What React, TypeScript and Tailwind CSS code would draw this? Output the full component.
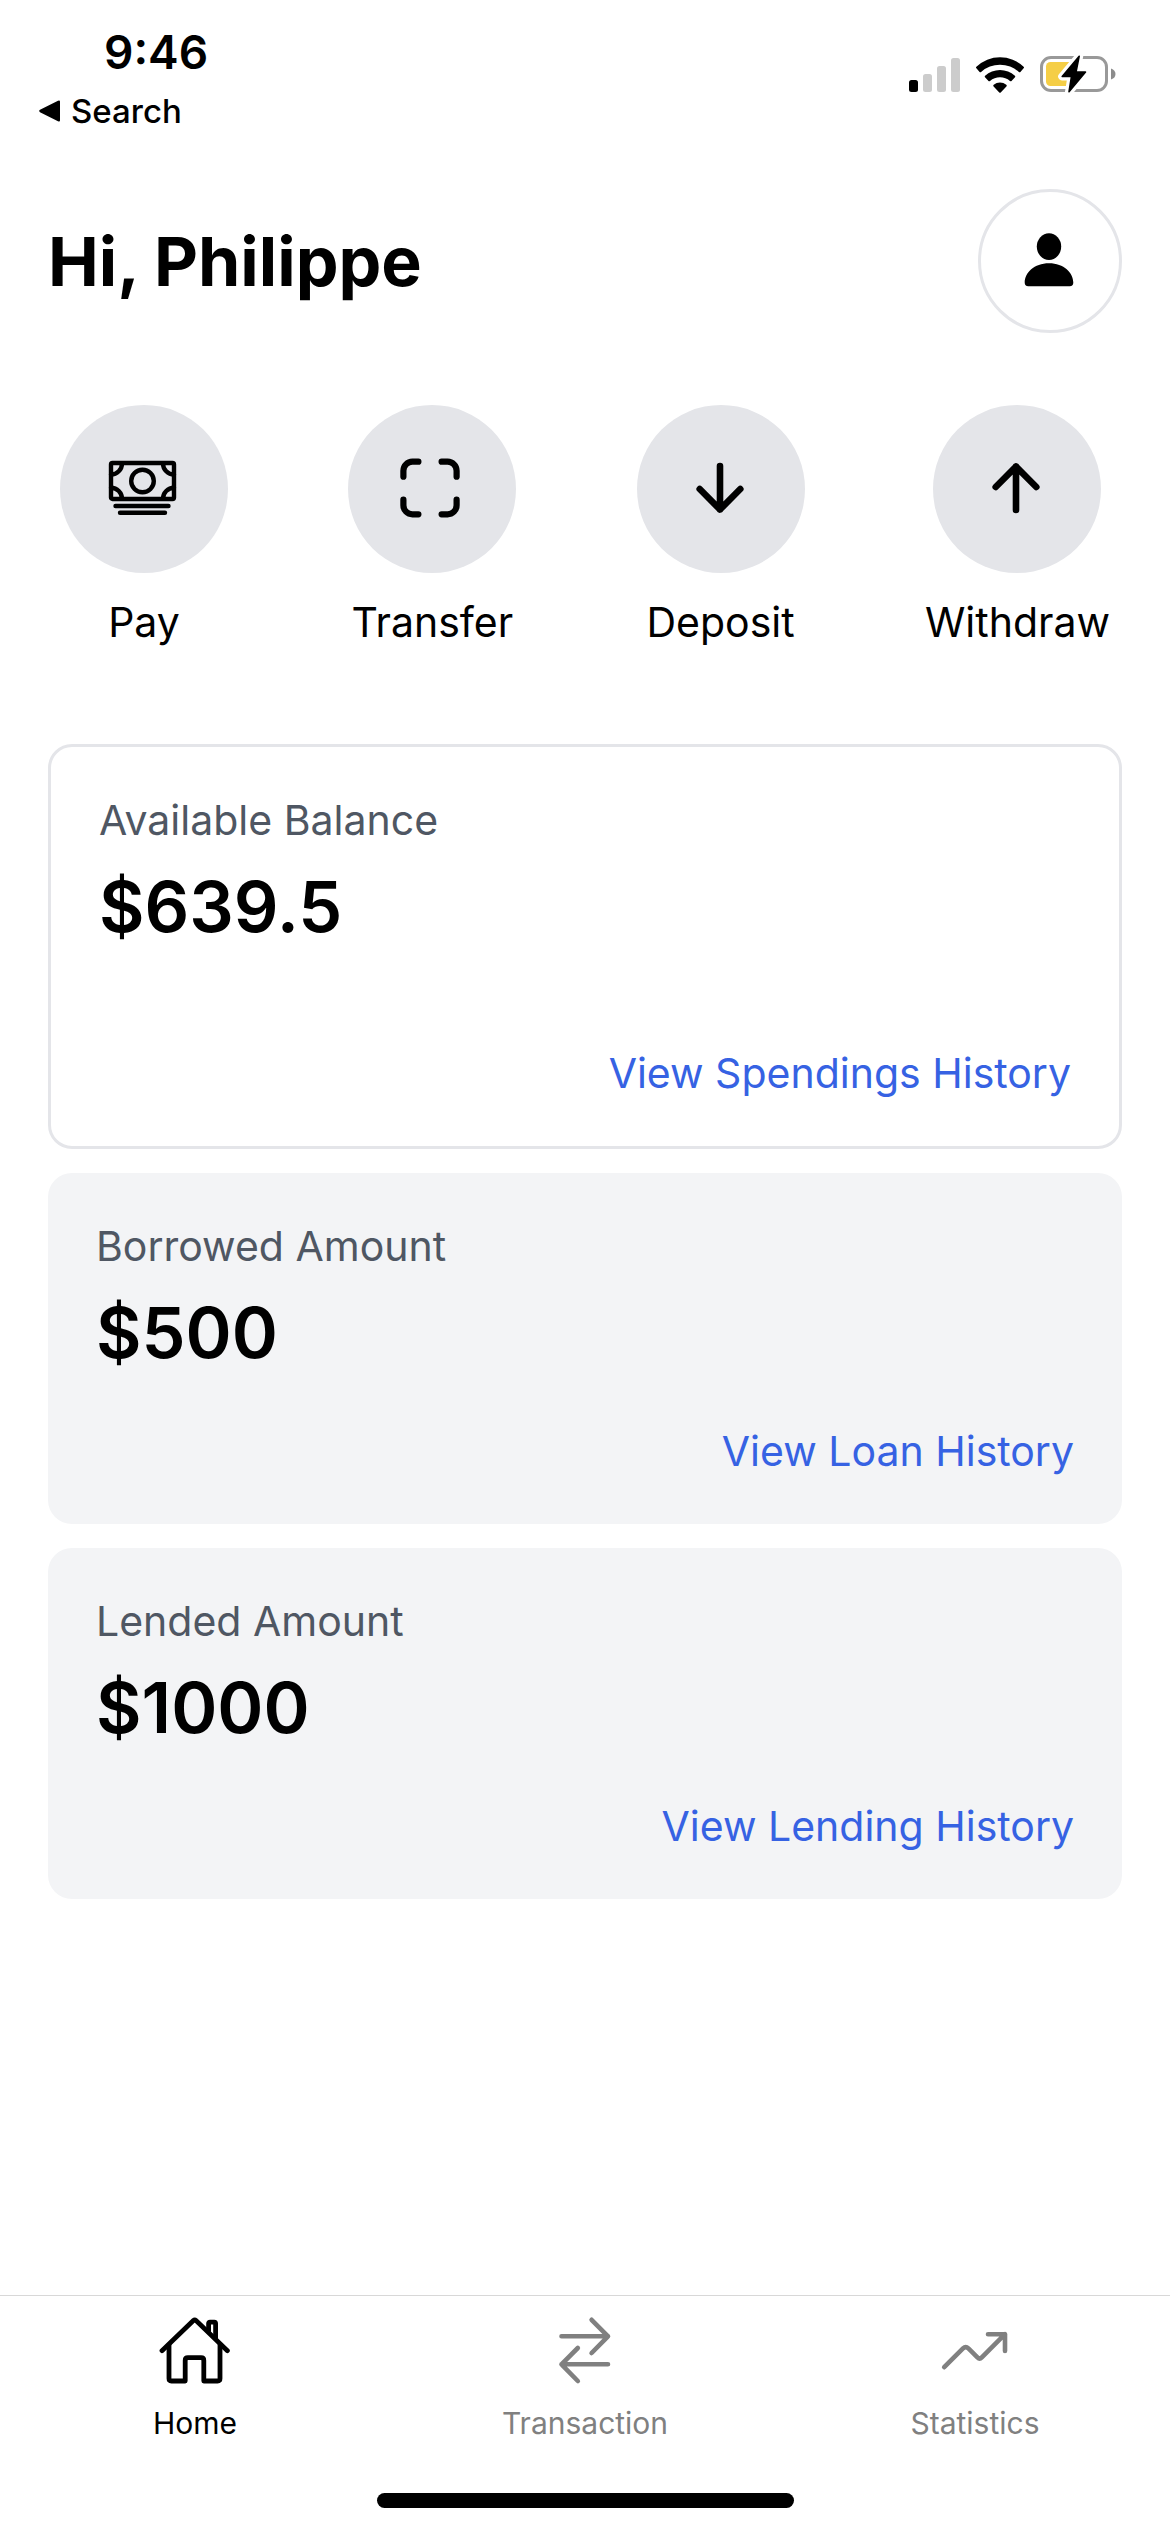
import React from "react";

interface IconProps {
    children: React.ReactNode;
    strokeWidth?: number;
}

// Line icons share one 72px grid
const Icon: React.FC<IconProps> = ({ children, strokeWidth = 5 }) => (
    <svg
        viewBox="0 0 72 72"
        className="w-[72px] h-[72px]"
        fill="none"
        stroke="currentColor"
        strokeWidth={strokeWidth}
        strokeLinecap="round"
        strokeLinejoin="round"
        aria-hidden="true"
    >
        {children}
    </svg>
);

const PayIcon = () => (
    <Icon strokeWidth={4.4}>
        <rect x="3" y="10" width="63" height="36" rx="1.5" />
        <circle cx="34.5" cy="28" r="11.3" />
        <path d="M14 10.5a11 11 0 0 1-11 11M55 10.5a11 11 0 0 0 11 11M3 34.8a11 11 0 0 1 11 11M66 34.8a11 11 0 0 0-11 11" />
        <path d="M7.5 53h53M12 59.7h45" />
    </Icon>
);

const TransferIcon = () => (
    <Icon strokeWidth={6.2}>
        <path d="M22.4 8.7h-6a9 9 0 0 0-9 9v6M45.6 8.7h6a9 9 0 0 1 9 9v6M7.4 46.7v5.6a9 9 0 0 0 9 9h6M60.6 46.7v5.6a9 9 0 0 1-9 9h-6" />
    </Icon>
);

const DepositIcon = () => (
    <Icon strokeWidth={6.6}>
        <path d="M35 13v43.5M14.7 36 35 56.5 55.3 36" />
    </Icon>
);

const WithdrawIcon = () => (
    <Icon strokeWidth={6.6}>
        <path d="M35 57V13.5M14.7 34 35 13.5 55.3 34" />
    </Icon>
);

const HomeIcon = () => (
    <Icon strokeWidth={4.8}>
        <path d="M3 36.7 34.4 6.6q1.3-1.2 2.6 0L68.4 36.7" />
        <path d="M10 31v33.6q0 2.4 2.4 2.4h13.8V46.4q0-2.7 2.7-2.7h13.2q2.7 0 2.7 2.7V67h13.8q2.4 0 2.4-2.4V31" />
        <path d="M49.6 17V9.5q0-1.4 1.4-1.4h4.2q1.4 0 1.4 1.4V24" />
    </Icon>
);

const TransactionIcon = () => (
    <Icon strokeWidth={4.6}>
        <path d="M12.5 22.3H59M42.6 5.8 59 22.3 42.6 39M59 50.3H12.5M28.8 34 12.5 50.3 28.8 67" />
    </Icon>
);

const StatisticsIcon = () => (
    <Icon strokeWidth={4.6}>
        <path d="M5.2 53.2 24 34.4q2.7-2.6 5.4 0l9 9q2.2 2.2 4.4 0L66 20.2M49 20.2h17V37" />
    </Icon>
);

const StatusIcons = () => (
    <div className="flex items-end gap-4">
        <svg viewBox="0 0 51 36" className="w-[51px] h-9" aria-hidden="true">
            <rect x="0" y="23" width="9" height="12" rx="2.5" />
            <rect x="14" y="17" width="9" height="18" rx="2.5" fill="#cccccc" />
            <rect x="28" y="9" width="9" height="26" rx="2.5" fill="#cccccc" />
            <rect x="42" y="1" width="9" height="34" rx="2.5" fill="#cccccc" />
        </svg>
        <svg viewBox="0 0 48 36" className="w-12 h-9" aria-hidden="true">
            <path d="M.4 11.2q-.8-.8 0-1.5a34 34 0 0 1 47.2 0q.8.7 0 1.5l-3.2 3.7q-.7.7-1.5 0a28.5 28.5 0 0 0-37.8 0q-.8.7-1.5 0z" />
            <path d="M9 20.3q-.7-.8.1-1.5a21.8 21.8 0 0 1 29.8 0q.8.7.1 1.5l-3.5 3.6q-.7.7-1.5 0a15.5 15.5 0 0 0-20 0q-.8.7-1.5 0z" />
            <path d="M17.6 29.4q-.8-.9.1-1.6a10 10 0 0 1 12.6 0q.9.7.1 1.6l-5.7 6.1q-.7.6-1.4 0z" />
        </svg>
        <svg viewBox="0 0 76 38" className="w-[76px] h-[38px]" aria-hidden="true">
            <rect x="1.5" y="2.5" width="65" height="33" rx="9.5" fill="none" stroke="#999999" strokeWidth="3" />
            <path d="M71 13.5q4.5 1.5 4.5 5.5t-4.5 5.5z" fill="#8c8c8c" />
            <rect x="6" y="7" width="35" height="24" rx="4.5" fill="#f5ce46" />
            <path
                d="M39.2 1.2 22.2 21.5h9.3L29 36.8 45.5 17H36z"
                fill="white"
                stroke="white"
                strokeWidth="8"
                strokeLinejoin="round"
            />
            <path
                d="M39.2 1.2 22.2 21.5h9.3L29 36.8 45.5 17H36z"
                stroke="black"
                strokeWidth="1.6"
                strokeLinejoin="round"
            />
        </svg>
    </div>
);

const actions = [
    { label: "Pay", icon: <PayIcon /> },
    { label: "Transfer", icon: <TransferIcon /> },
    { label: "Deposit", icon: <DepositIcon /> },
    { label: "Withdraw", icon: <WithdrawIcon /> },
];

const tabs = [
    { label: "Home", icon: <HomeIcon />, active: true },
    { label: "Transaction", icon: <TransactionIcon />, active: false },
    { label: "Statistics", icon: <StatisticsIcon />, active: false },
];

interface AmountCardProps {
    title: string;
    amount: string;
    link: string;
    outlined?: boolean;
}

const AmountCard: React.FC<AmountCardProps> = ({ title, amount, link, outlined }) => (
    <section
        className={
            outlined
                ? "flex flex-col p-12 rounded-3xl border-3 border-[#e4e5e9]"
                : "flex flex-col p-12 rounded-3xl bg-[#f3f4f6]"
        }
    >
        <h2 className="text-[41px] leading-[50px] text-[#4f5763]">{title}</h2>
        <p className="mt-3 text-[70px] leading-[100px] font-semibold">{amount}</p>
        <a
            href="#"
            className={
                outlined
                    ? "mt-[91px] self-end text-[41px] leading-[50px] text-[#3662e3]"
                    : "mt-[43px] self-end text-[41px] leading-[50px] text-[#3662e3]"
            }
        >
            {link}
        </a>
    </section>
);

const App: React.FC = () => {
    return (
        <div className="min-h-screen flex flex-col bg-white text-black font-['Inter',sans-serif]">
            {/* Status bar */}
            <div className="flex justify-between items-start pt-[22px] pr-[54px]">
                <div>
                    <p className="pl-[104px] text-[46px] leading-[60px] font-semibold">9:46</p>
                    <a href="#" className="flex items-center gap-2.5 mt-2 pl-[39px] text-[33px] leading-[42px] font-medium">
                        <svg viewBox="0 0 22 22" className="w-[22px] h-[22px]" aria-hidden="true">
                            <path d="M19 .8q2-1 2 1v18.4q0 2-2 1L1 12.2q-1.6-1.2 0-2.4z" />
                        </svg>
                        Search
                    </a>
                </div>
                <div className="pt-[33px]">
                    <StatusIcons />
                </div>
            </div>

            <main className="px-12 pt-[57px]">
                {/* Greeting */}
                <header className="flex items-center justify-between">
                    <h1 className="text-[68px] leading-[84px] font-bold">Hi, Philippe</h1>
                    <button
                        aria-label="Profile"
                        className="flex items-center justify-center w-36 h-36 rounded-full border-3 border-[#e4e5e9]"
                    >
                        <svg viewBox="0 0 72 72" className="w-[72px] h-[72px]" aria-hidden="true">
                            <ellipse cx="35" cy="21.6" rx="12.2" ry="13.3" />
                            <path d="M10.7 57.5C10.7 48 20 38.3 35 38.3s24.3 9.7 24.3 19.2q0 3.8-3.6 3.8H14.3q-3.6 0-3.6-3.8z" />
                        </svg>
                    </button>
                </header>

                {/* Quick actions */}
                <div className="flex justify-between mt-[72px] px-3">
                    {actions.map((action) => (
                        <button key={action.label} className="flex flex-col items-center">
                            <span className="flex items-center justify-center w-[168px] h-[168px] rounded-full bg-[#e4e5e9]">
                                {action.icon}
                            </span>
                            <span className="mt-6 text-[41px] leading-[50px]">{action.label}</span>
                        </button>
                    ))}
                </div>

                {/* Balances */}
                <div className="flex flex-col gap-6 mt-[97px]">
                    <AmountCard
                        title="Available Balance"
                        amount="$639.5"
                        link="View Spendings History"
                        outlined
                    />
                    <AmountCard title="Borrowed Amount" amount="$500" link="View Loan History" />
                    <AmountCard title="Lended Amount" amount="$1000" link="View Lending History" />
                </div>
            </main>

            {/* Bottom tabs */}
            <footer className="mt-auto border-t border-[#d8d8d8]">
                <nav className="grid grid-cols-3 pt-[18px]">
                    {tabs.map((tab) => (
                        <a
                            key={tab.label}
                            href="#"
                            className={
                                tab.active
                                    ? "flex flex-col items-center text-black"
                                    : "flex flex-col items-center text-[#808080]"
                            }
                        >
                            {tab.icon}
                            <span className="mt-[19px] text-[30px] leading-9">{tab.label}</span>
                        </a>
                    ))}
                </nav>
                <div className="mx-auto mt-[52px] mb-6 w-[417px] h-[15px] rounded-full bg-black" />
            </footer>
        </div>
    );
};

export default App;
